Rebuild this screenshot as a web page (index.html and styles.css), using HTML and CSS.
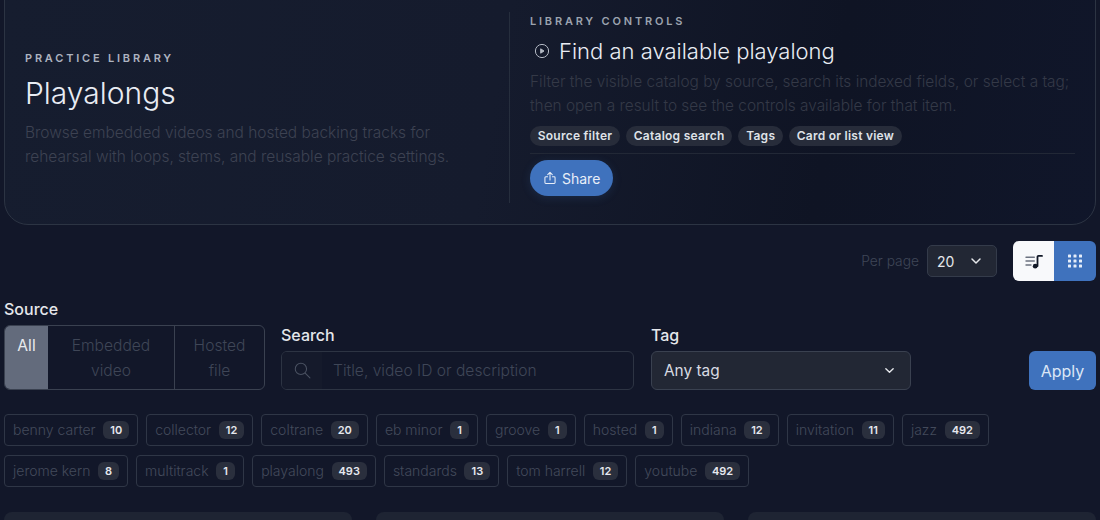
FILE: index.html
```html
<!DOCTYPE html>
<html lang="en">
<head>
<meta charset="utf-8">
<title>Playalongs</title>
<link rel="stylesheet" href="styles.css">
</head>
<body>
<main class="page">
  <section class="hero">
    <div class="hero-left">
      <p class="eyebrow eyebrow-left">PRACTICE LIBRARY</p>
      <h1 class="hero-title">Playalongs</h1>
      <p class="muted muted-left">Browse embedded videos and hosted backing tracks for<br>rehearsal with loops, stems, and reusable practice settings.</p>
    </div>
    <div class="hero-right">
      <p class="eyebrow">LIBRARY CONTROLS</p>
      <h2 class="panel-title">
        <svg class="play-icon" viewBox="0 0 16 16" fill="none" stroke="currentColor" stroke-width="1"><circle cx="8" cy="8" r="6.6"/><path d="M6.7 5.8 10 8l-3.300 2.200z" fill="currentColor" stroke-linejoin="round"/></svg>
        Find an available playalong
      </h2>
      <p class="muted muted-right">Filter the visible catalog by source, search its indexed fields, or select a tag;<br>then open a result to see the controls available for that item.</p>
      <div class="chips">
        <span class="chip">Source filter</span>
        <span class="chip">Catalog search</span>
        <span class="chip">Tags</span>
        <span class="chip">Card or list view</span>
      </div>
      <div class="actions">
        <button class="share">
          <svg class="share-icon" viewBox="0 0 16 16" fill="none" stroke="currentColor" stroke-width="1.2" stroke-linecap="round" stroke-linejoin="round"><path d="M8 10.200V1.800M5.400 4.200 8 1.600l2.600 2.600M5.200 6.600H3.200c-.6 0-1 .4-1 1v5.600c0 .6.400 1 1 1h9.600c.6 0 1-.4 1-1V7.600c0-.6-.4-1-1-1h-2"/></svg>
          Share
        </button>
      </div>
    </div>
  </section>

  <div class="toolbar">
    <span class="per-label">Per page</span>
    <div class="per-select">20
      <svg class="chev" viewBox="0 0 12 12" fill="none" stroke="currentColor" stroke-width="1.5" stroke-linecap="round" stroke-linejoin="round"><path d="M2 4l4 4 4-4"/></svg>
    </div>
    <div class="view-toggle">
      <span class="view-btn view-list">
        <svg class="view-icon" viewBox="0 0 18 16" fill="none"><path d="M1 4.300h8.300M1 8h8.300M1 12h5" stroke="#6b7280" stroke-width="1.400" stroke-linecap="round"/><path d="M12.500 13V3.900c0-.6.400-1 1-1H17" stroke="#111827" stroke-width="1.800" stroke-linecap="round"/><circle cx="10.200" cy="13.200" r="2.400" fill="#111827"/></svg>
      </span>
      <span class="view-btn view-grid">
        <svg class="view-icon" viewBox="0 0 16 16" fill="#e5edf9"><rect x="1" y="1.500" width="3" height="3" rx=".6"/><rect x="6.500" y="1.500" width="3" height="3" rx=".6"/><rect x="12" y="1.500" width="3" height="3" rx=".6"/><rect x="1" y="6.500" width="3" height="3" rx=".6"/><rect x="6.500" y="6.500" width="3" height="3" rx=".6"/><rect x="12" y="6.500" width="3" height="3" rx=".6"/><rect x="1" y="11.500" width="3" height="3" rx=".6"/><rect x="6.500" y="11.500" width="3" height="3" rx=".6"/><rect x="12" y="11.500" width="3" height="3" rx=".6"/></svg>
      </span>
    </div>
  </div>

  <form class="filters">
    <div class="field field-source">
      <span class="label">Source</span>
      <div class="segments">
        <span class="seg seg-all">All</span>
        <span class="seg seg-embedded">Embedded video</span>
        <span class="seg seg-hosted">Hosted file</span>
      </div>
    </div>
    <div class="field field-search">
      <span class="label">Search</span>
      <div class="search-box">
        <span class="search-addon">
          <svg class="search-icon" viewBox="0 0 16 16" fill="none" stroke="currentColor" stroke-width="1" stroke-linecap="round"><circle cx="6.500" cy="6.500" r="5.300"/><path d="m10.500 10.500 4.500 4.500"/></svg>
        </span>
        <span class="placeholder">Title, video ID or description</span>
      </div>
    </div>
    <div class="field field-tag">
      <span class="label">Tag</span>
      <div class="tag-select">Any tag
        <svg class="chev chev-small" viewBox="0 0 12 12" fill="none" stroke="currentColor" stroke-width="1.500" stroke-linecap="round" stroke-linejoin="round"><path d="M2 4l4 4 4-4"/></svg>
      </div>
    </div>
    <button class="apply" type="button">Apply</button>
  </form>

  <div class="tags">
    <span class="tag">benny carter<b class="count">10</b></span>
    <span class="tag">collector<b class="count">12</b></span>
    <span class="tag">coltrane<b class="count">20</b></span>
    <span class="tag">eb minor<b class="count">1</b></span>
    <span class="tag">groove<b class="count">1</b></span>
    <span class="tag">hosted<b class="count">1</b></span>
    <span class="tag">indiana<b class="count">12</b></span>
    <span class="tag">invitation<b class="count">11</b></span>
    <span class="tag">jazz<b class="count">492</b></span>
    <span class="tag">jerome kern<b class="count">8</b></span>
    <span class="tag">multitrack<b class="count">1</b></span>
    <span class="tag">playalong<b class="count">493</b></span>
    <span class="tag">standards<b class="count">13</b></span>
    <span class="tag">tom harrell<b class="count">12</b></span>
    <span class="tag">youtube<b class="count">492</b></span>
  </div>

  <div class="cards">
    <div class="card"></div>
    <div class="card"></div>
    <div class="card"></div>
  </div>
</main>
</body>
</html>
```

FILE: styles.css
```css
* { box-sizing: border-box; }

html, body {
  margin: 0;
  height: 520px;
  overflow: hidden;
}

body {
  background: #121729;
  font-family: Inter, "Noto Sans", sans-serif;
  color: #e5e7eb;
}

p, h1, h2 { margin: 0; font-weight: 400; }

.page {
  padding: 0 4px;
}

/* Hero */
.hero {
  margin-top: -24px;
  height: 249px;
  display: grid;
  grid-template-columns: 485px 1fr;
  border: 1px solid #2c3443;
  border-radius: 24px;
  padding: 35px 20px 20px 20px;
  background: linear-gradient(100deg, #161d2f 0%, #151b2d 45%, #0f1424 75%, #10162a 100%);
}

.hero-left {
  display: flex;
  flex-direction: column;
  justify-content: center;
  border-right: 1px solid #262e3d;
  height: 191px;
  padding-top: 3px;
}

.hero-right {
  padding-left: 20px;
  display: flex;
  flex-direction: column;
}

.eyebrow {
  font-size: 11px;
  font-weight: 600;
  letter-spacing: 2.800px;
  line-height: 18px;
  color: #9ca3af;
}

.eyebrow-left { color: #adb3c0; }

.hero-title {
  font-size: 30px;
  line-height: 44px;
  font-weight: 300;
  margin-top: 4px;
  margin-bottom: 6px;
  color: #e9ecf3;
}

.muted {
  font-size: 15.4px;
  font-weight: 300;
  line-height: 24px;
  color: #3d4252;
}

.muted-left { font-size: 15.46px; }
.muted-right { color: #343947; margin-top: 3px; white-space: nowrap; }

.panel-title {
  display: flex;
  align-items: center;
  font-size: 22px;
  font-weight: 300;
  line-height: 32px;
  color: #e9ecf3;
  margin-top: 5px;
}

.play-icon {
  width: 16px;
  height: 16px;
  margin: 0 9px 0 4px;
  color: #b4bac5;
}

.chips {
  display: flex;
  gap: 6px;
  margin-top: 8px;
  padding-bottom: 7px;
  border-bottom: 1px solid #222836;
}

.chip {
  height: 20px;
  padding: 0 7.75px;
  border-radius: 10px;
  background: #272c3a;
  font-size: 12px;
  font-weight: 600;
  line-height: 20px;
  letter-spacing: .25px;
  color: #dfe2e8;
}

.actions { margin-top: 6px; }

.share {
  display: flex;
  align-items: center;
  gap: 5px;
  height: 36px;
  width: 83px;
  padding: 0 0 0 13px;
  border: 0;
  border-radius: 18px;
  background: #3f72bd;
  box-shadow: 0 2px 10px rgba(63, 114, 189, .18);
  color: #e8eef8;
  font: 400 14px Inter, sans-serif;
}

.share-icon { width: 14px; height: 14px; }

/* Toolbar */
.toolbar {
  display: flex;
  align-items: center;
  justify-content: flex-end;
  margin-top: 16px;
  height: 40px;
}

.per-label {
  font-size: 13.8px;
  font-weight: 300;
  color: #3f4657;
  margin-right: 8px;
}

.per-select {
  display: flex;
  align-items: center;
  justify-content: space-between;
  width: 70px;
  height: 32px;
  padding: 0 14px 0 9px;
  margin-right: 16px;
  border: 1px solid #343b4a;
  border-radius: 5px;
  background: #222734;
  font-size: 14px;
  color: #e5e7eb;
}

.chev { width: 12px; height: 12px; color: #e5e7eb; }

.view-toggle {
  display: flex;
  width: 83px;
  height: 40px;
  border-radius: 6px;
  overflow: hidden;
}

.view-btn {
  display: flex;
  align-items: center;
  justify-content: center;
}

.view-list { width: 41px; background: #f8f9fb; }
.view-grid { width: 42px; background: #3f72bd; }
.view-icon { width: 18px; height: 16px; }

/* Filters */
.filters {
  display: flex;
  align-items: flex-end;
  margin-top: 16px;
}

.field { display: flex; flex-direction: column; }

.label {
  font-size: 16px;
  font-weight: 500;
  line-height: 24px;
  margin-bottom: 4px;
  color: #e5e7eb;
}

.field-source { width: 261px; margin-right: 16px; }
.field-search { width: 353px; margin-right: 17px; }
.field-tag { width: 260px; margin-right: 118px; }

.segments {
  display: flex;
  height: 65px;
  border: 1px solid #3a4150;
  border-radius: 6px;
  overflow: hidden;
}

.seg {
  font-size: 15.6px;
  font-weight: 300;
  line-height: 25px;
  text-align: center;
  padding-top: 7px;
  color: #3f4657;
}

.seg-all { flex: none; width: 43px; background: #636b7c; color: #e8eaee; font-weight: 400; }
.seg-embedded { flex: none; width: 127px; padding: 7px 20px 0; border-right: 1px solid #3a4150; }
.seg-hosted { flex: 1; padding: 7px 15px 0; }

.search-box {
  display: flex;
  align-items: center;
  height: 39px;
  border: 1px solid #2d3443;
  border-radius: 6px;
  overflow: hidden;
}

.search-addon {
  display: flex;
  align-items: center;
  justify-content: center;
  width: 40px;
  height: 100%;
  background: #151a2b;
  color: #4a5161;
}

.search-icon { width: 17px; height: 17px; }

.placeholder {
  padding-left: 11px;
  font-size: 15.6px;
  font-weight: 300;
  color: #3f4657;
}

.tag-select {
  display: flex;
  align-items: center;
  justify-content: space-between;
  height: 39px;
  padding: 0 15px 0 12px;
  border: 1px solid #3a4150;
  border-radius: 6px;
  background: #222734;
  font-size: 15.4px;
  color: #d8dbe2;
}

.chev-small { width: 11px; height: 11px; }

.apply {
  width: 67px;
  height: 39px;
  border: 0;
  border-radius: 6px;
  background: #3f72bd;
  color: #dbe6f6;
  font: 400 16px Inter, sans-serif;
}

/* Tags */
.tags {
  display: flex;
  flex-wrap: wrap;
  gap: 9px 8px;
  margin-top: 24px;
  height: 73px;
}

.tag {
  display: flex;
  align-items: center;
  height: 32px;
  padding: 0 8px 1px;
  border: 1px solid #2f3646;
  border-radius: 4px;
  font-size: 14px;
  font-weight: 300;
  color: #434a5b;
}

.count {
  margin-left: 7.6px;
  padding: 0 7px;
  height: 18px;
  min-width: 19px;
  border-radius: 6px;
  background: #2a2f3d;
  color: #e6e8ee;
  font-size: 11px;
  font-weight: 600;
  line-height: 18px;
  text-align: center;
}

/* Cards */
.cards {
  display: grid;
  grid-template-columns: repeat(3, 1fr);
  gap: 24px;
  margin-top: 25px;
}

.card {
  height: 8px;
  border-radius: 8px 8px 0 0;
  background: #1e2433;
}
```
